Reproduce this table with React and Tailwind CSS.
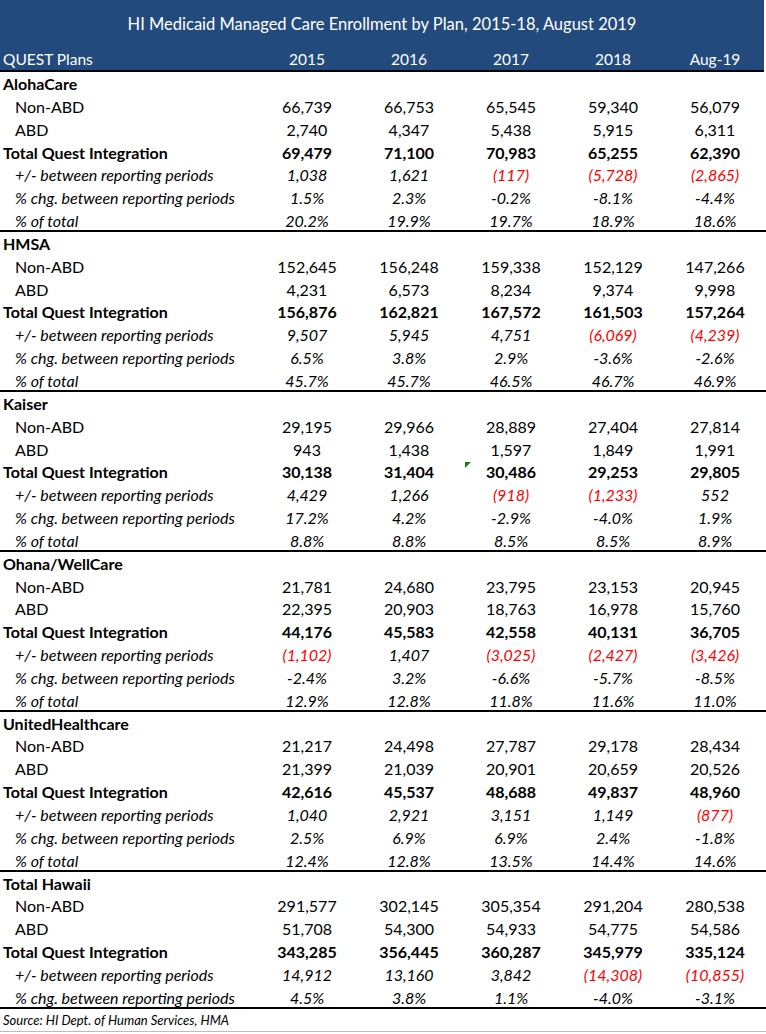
import React from "react";

const groups = [
  {
    name: "AlohaCare",
    nonabd: ["66,739", "66,753", "65,545", "59,340", "56,079"],
    abd: ["2,740", "4,347", "5,438", "5,915", "6,311"],
    total: ["69,479", "71,100", "70,983", "65,255", "62,390"],
    diff: ["1,038", "1,621", "(117)", "(5,728)", "(2,865)"],
    chg: ["1.5%", "2.3%", "-0.2%", "-8.1%", "-4.4%"],
    pct: ["20.2%", "19.9%", "19.7%", "18.9%", "18.6%"],
  },
  {
    name: "HMSA",
    nonabd: ["152,645", "156,248", "159,338", "152,129", "147,266"],
    abd: ["4,231", "6,573", "8,234", "9,374", "9,998"],
    total: ["156,876", "162,821", "167,572", "161,503", "157,264"],
    diff: ["9,507", "5,945", "4,751", "(6,069)", "(4,239)"],
    chg: ["6.5%", "3.8%", "2.9%", "-3.6%", "-2.6%"],
    pct: ["45.7%", "45.7%", "46.5%", "46.7%", "46.9%"],
  },
  {
    name: "Kaiser",
    nonabd: ["29,195", "29,966", "28,889", "27,404", "27,814"],
    abd: ["943", "1,438", "1,597", "1,849", "1,991"],
    total: ["30,138", "31,404", "30,486", "29,253", "29,805"],
    diff: ["4,429", "1,266", "(918)", "(1,233)", "552"],
    chg: ["17.2%", "4.2%", "-2.9%", "-4.0%", "1.9%"],
    pct: ["8.8%", "8.8%", "8.5%", "8.5%", "8.9%"],
    flag: true,
  },
  {
    name: "Ohana/WellCare",
    nonabd: ["21,781", "24,680", "23,795", "23,153", "20,945"],
    abd: ["22,395", "20,903", "18,763", "16,978", "15,760"],
    total: ["44,176", "45,583", "42,558", "40,131", "36,705"],
    diff: ["(1,102)", "1,407", "(3,025)", "(2,427)", "(3,426)"],
    chg: ["-2.4%", "3.2%", "-6.6%", "-5.7%", "-8.5%"],
    pct: ["12.9%", "12.8%", "11.8%", "11.6%", "11.0%"],
  },
  {
    name: "UnitedHealthcare",
    nonabd: ["21,217", "24,498", "27,787", "29,178", "28,434"],
    abd: ["21,399", "21,039", "20,901", "20,659", "20,526"],
    total: ["42,616", "45,537", "48,688", "49,837", "48,960"],
    diff: ["1,040", "2,921", "3,151", "1,149", "(877)"],
    chg: ["2.5%", "6.9%", "6.9%", "2.4%", "-1.8%"],
    pct: ["12.4%", "12.8%", "13.5%", "14.4%", "14.6%"],
  },
  {
    name: "Total Hawaii",
    nonabd: ["291,577", "302,145", "305,354", "291,204", "280,538"],
    abd: ["51,708", "54,300", "54,933", "54,775", "54,586"],
    total: ["343,285", "356,445", "360,287", "345,979", "335,124"],
    diff: ["14,912", "13,160", "3,842", "(14,308)", "(10,855)"],
    chg: ["4.5%", "3.8%", "1.1%", "-4.0%", "-3.1%"],
  },
];

const rowCls = "grid grid-cols-[256px_repeat(5,102px)] h-[22.85px] items-center";

function Row({ label, values, kind, last, flag }) {
  const labelCls =
    kind === "plan"
      ? "pl-[3px] font-bold"
      : kind === "total"
      ? "pl-[3px] font-bold"
      : kind === "italic"
      ? "pl-[15px] italic"
      : "pl-[15px]";
  const valCls =
    kind === "total" ? "font-bold" : kind === "italic" ? "italic" : "";
  return (
    <div className={`${rowCls} ${last ? "border-b-2 border-black" : ""}`}>
      <div className={`${labelCls} whitespace-nowrap`}>{label}</div>
      {values &&
        values.map((v, i) => (
          <div
            key={i}
            className={`relative h-full flex items-center justify-center ${valCls} ${
              v.startsWith("(") ? "text-[#ff0000]" : ""
            }`}
          >
            {flag && i === 2 && (
              <span className="absolute left-[5px] top-[2px] w-0 h-0 border-t-[6px] border-t-[#1a7f1a] border-r-[6px] border-r-transparent" />
            )}
            {v}
          </div>
        ))}
    </div>
  );
}

export default function App() {
  return (
    <div
      className="w-[766px] h-[1034px] bg-white text-black text-[16px]"
      style={{ fontFamily: "Lato, 'Open Sans', sans-serif" }}
    >
      <div className="w-[764px] bg-[#234a7d] text-white border-b-2 border-black">
        <div className="h-[48px] flex items-center justify-center text-[16.5px]">
          HI Medicaid Managed Care Enrollment by Plan, 2015-18, August 2019
        </div>
        <div className="grid grid-cols-[256px_repeat(5,102px)] h-[22px] items-center text-[15.5px]">
          <div className="pl-[3px]">QUEST Plans</div>
          {["2015", "2016", "2017", "2018", "Aug-19"].map((y) => (
            <div key={y} className="text-center">
              {y}
            </div>
          ))}
        </div>
      </div>
      {groups.map((g) => (
        <div key={g.name}>
          <Row label={g.name} kind="plan" />
          <Row label="Non-ABD" values={g.nonabd} />
          <Row label="ABD" values={g.abd} />
          <Row label="Total Quest Integration" values={g.total} kind="total" flag={g.flag} />
          <Row label="+/- between reporting periods" values={g.diff} kind="italic" />
          <Row
            label="% chg. between reporting periods"
            values={g.chg}
            kind="italic"
            last={!g.pct}
          />
          {g.pct && <Row label="% of total" values={g.pct} kind="italic" last />}
        </div>
      ))}
      <div className="h-[23px] flex items-center pl-[3px] pt-[3px] italic text-[13px] border-b border-[#bdbdbd]">
        Source: HI Dept. of Human Services, HMA
      </div>
    </div>
  );
}
